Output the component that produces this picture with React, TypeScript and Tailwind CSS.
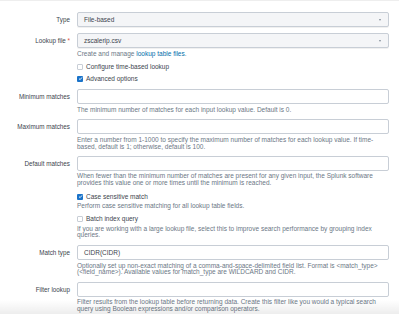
import type { ReactNode } from "react";

function Label({ children, required }: { children: ReactNode; required?: boolean }) {
  return (
    <div className="w-[70px] shrink-0 text-right text-[6.3px] text-[#3c444d] leading-[15px]">
      {children}
      {required && <span className="text-[#dc4e41]"> *</span>}
    </div>
  );
}

function Help({ children, className = "" }: { children: ReactNode; className?: string }) {
  return (
    <div className={`whitespace-nowrap text-[6.5px] leading-[6.5px] text-[#6b7785] ${className}`}>{children}</div>
  );
}

function Select({ value }: { value: string }) {
  return (
    <div className="flex h-[15px] w-[312px] items-center justify-between rounded-[2px] border border-[#c8ced6] bg-[#f4f5f7] pl-[6px] pr-[7px] text-[6.5px] text-[#3c444d] shadow-[0_1px_0_rgba(0,0,0,0.06)]">
      <span>{value}</span>
      <span className="h-0 w-0 border-x-[1.5px] border-t-[2px] border-x-transparent border-t-[#818d99]" />
    </div>
  );
}

function Input({ value = "" }: { value?: string }) {
  return (
    <div className="flex h-[15px] w-[312px] items-center rounded-[2px] border border-[#c8ced6] bg-white pl-[6px] text-[6.5px] text-[#3c444d]">
      {value}
    </div>
  );
}

function Check({ label, checked, className = "" }: { label: string; checked?: boolean; className?: string }) {
  return (
    <div className={`flex h-[11px] items-center gap-[3px] pl-[77px] text-[6.5px] text-[#3c444d] ${className}`}>
      {checked ? (
        <span className="flex h-[6px] w-[6px] items-center justify-center rounded-[1px] bg-[#1a73c9]">
          <svg viewBox="0 0 10 10" className="h-[5px] w-[5px]">
            <path d="M2 5.2 L4.2 7.3 L8 2.8" fill="none" stroke="white" strokeWidth="1.8" />
          </svg>
        </span>
      ) : (
        <span className="h-[6px] w-[6px] rounded-[1px] border border-[#c8ced6] bg-white" />
      )}
      <span>{label}</span>
    </div>
  );
}

function Row({ label, required, children, className = "" }: { label: string; required?: boolean; children: ReactNode; className?: string }) {
  return (
    <div className={`flex gap-[7px] ${className}`}>
      <Label required={required}>{label}</Label>
      <div className="w-[312px]">{children}</div>
    </div>
  );
}

export default function App() {
  return (
    <div
      className="relative h-[314px] w-[399px] overflow-hidden border-t border-[#eeeeee] bg-white"
      style={{ fontFamily: '"Liberation Sans", Arial, sans-serif' }}
    >
      <Row label="Type" className="mt-[11px]">
        <Select value="File-based" />
      </Row>
      <Row label="Lookup file" required className="mt-[6px]">
        <Select value="zscalerip.csv" />
        <Help className="mt-[2px] leading-[7px]">
          Create and manage <span className="text-[#006eaa]">lookup table files</span>.
        </Help>
      </Row>
      <Check label="Configure time-based lookup" className="mt-[4px]" />
      <Check label="Advanced options" checked className="mt-[1px]" />

      <Row label="Minimum matches" className="mt-[5px]">
        <Input />
        <Help className="mt-[2px] leading-[7px]">
          The minimum number of matches for each input lookup value. Default is 0.
        </Help>
      </Row>
      <Row label="Maximum matches" className="mt-[6px]">
        <Input />
        <Help className="mt-[3px]">
          Enter a number from 1-1000 to specify the maximum number of matches for each lookup value. If time-
          <br />
          based, default is 1; otherwise, default is 100.
        </Help>
      </Row>
      <Row label="Default matches" className="mt-[6px]">
        <Input />
        <Help className="mt-[2px]">
          When fewer than the minimum number of matches are present for any given input, the Splunk software
          <br />
          provides this value one or more times until the minimum is reached.
        </Help>
      </Row>

      <Check label="Case sensitive match" checked className="mt-[5px]" />
      <div className="pl-[77px]">
        <Help className="mt-[1px]">Perform case sensitive matching for all lookup table fields.</Help>
      </div>
      <Check label="Batch index query" className="mt-[4px]" />
      <div className="pl-[77px]">
        <Help className="mt-[1px]">
          If you are working with a large lookup file, select this to improve search performance by grouping index
          <br />
          queries.
        </Help>
      </div>

      <Row label="Match type" className="mt-[6.5px]">
        <Input value="CIDR(CIDR)" />
        <Help className="mt-[2.5px]">
          Optionally set up non-exact matching of a comma-and-space-delimited field list. Format is &lt;match_type&gt;
          <br />
          (&lt;field_name&gt;). Available values for match_type are WILDCARD and CIDR.
        </Help>
      </Row>
      <Row label="Filter lookup" className="mt-[6.5px]">
        <Input />
        <Help className="mt-[2px]">
          Filter results from the lookup table before returning data. Create this filter like you would a typical search
          <br />
          query using Boolean expressions and/or comparison operators.
        </Help>
      </Row>

      <div className="pointer-events-none absolute inset-x-0 bottom-0 h-[14px] bg-gradient-to-b from-transparent to-[rgba(0,0,0,0.07)]" />
    </div>
  );
}
